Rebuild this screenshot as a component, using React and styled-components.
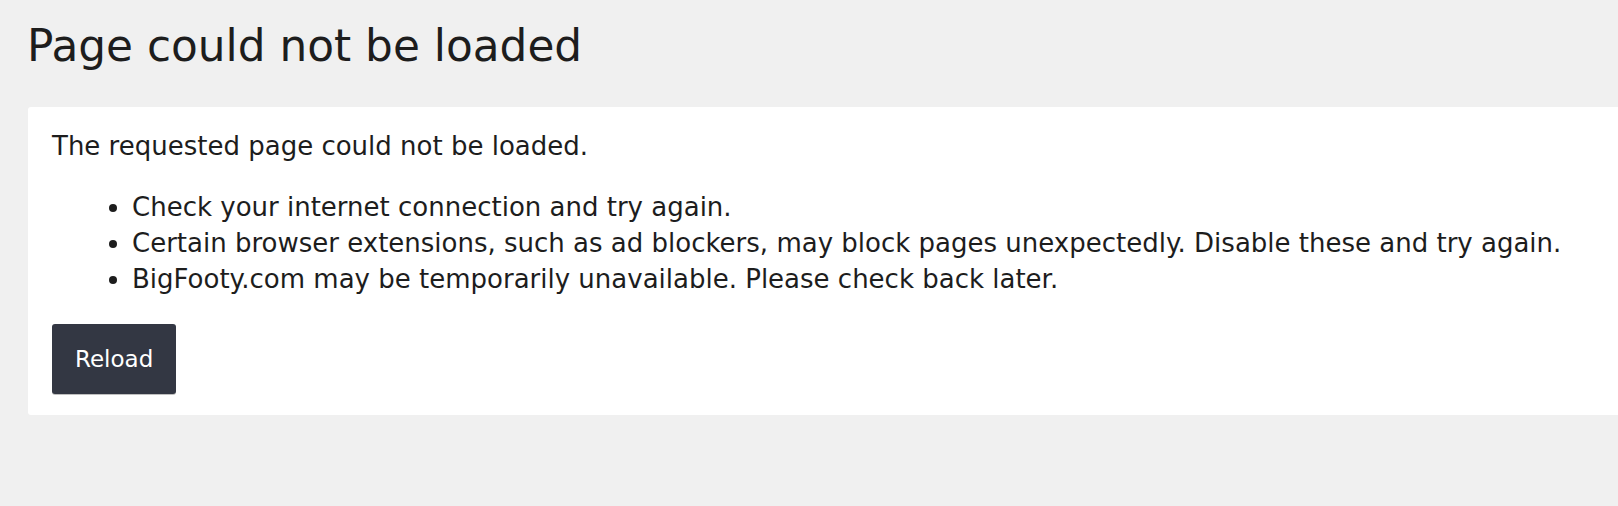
import React from 'react';
import styled, { createGlobalStyle } from 'styled-components';

const GlobalStyle = createGlobalStyle`
  html, body {
    margin: 0;
    padding: 0;
    background: #f0f0f0;
    font-family: "DejaVu Sans", Verdana, sans-serif;
    color: #1d1d1d;
    overflow: hidden;
  }
`;

const Page = styled.div`
  display: flex;
  flex-direction: column;
  padding-top: 20px;
  min-height: 506px;
  box-sizing: border-box;
`;

const Title = styled.h1`
  margin: 0 0 35px 27px;
  font-size: 43.8px;
  line-height: 52px;
  font-weight: normal;
  color: #1d1d1d;
`;

const Card = styled.div`
  margin-left: 28px;
  background: #ffffff;
  border-radius: 3px 0 0 3px;
  padding: 24px 24px 21px 24px;
`;

const Message = styled.p`
  margin: 0;
  font-size: 26px;
  line-height: 30px;
`;

const List = styled.ul`
  margin: 28px 0 0 0;
  padding-left: 80px;
  font-size: 26px;
  line-height: 36px;
`;

const Item = styled.li`
  margin: 0;
`;

const Actions = styled.div`
  margin-top: 27px;
  display: flex;
`;

const Button = styled.button`
  height: 70px;
  padding: 0 23px;
  background: #333743;
  color: #ffffff;
  border: none;
  border-radius: 3px;
  box-shadow: 0 1px 0 rgba(0, 0, 0, 0.25);
  font-family: "DejaVu Sans", Verdana, sans-serif;
  font-size: 23px;
  cursor: pointer;
`;

export default function App() {
  return (
    <>
      <GlobalStyle />
      <Page>
        <Title>Page could not be loaded</Title>
        <Card>
          <Message>The requested page could not be loaded.</Message>
          <List>
            <Item>Check your internet connection and try again.</Item>
            <Item>Certain browser extensions, such as ad blockers, may block pages unexpectedly. Disable these and try again.</Item>
            <Item>BigFooty.com may be temporarily unavailable. Please check back later.</Item>
          </List>
          <Actions>
            <Button onClick={() => window.location.reload()}>Reload</Button>
          </Actions>
        </Card>
      </Page>
    </>
  );
}
